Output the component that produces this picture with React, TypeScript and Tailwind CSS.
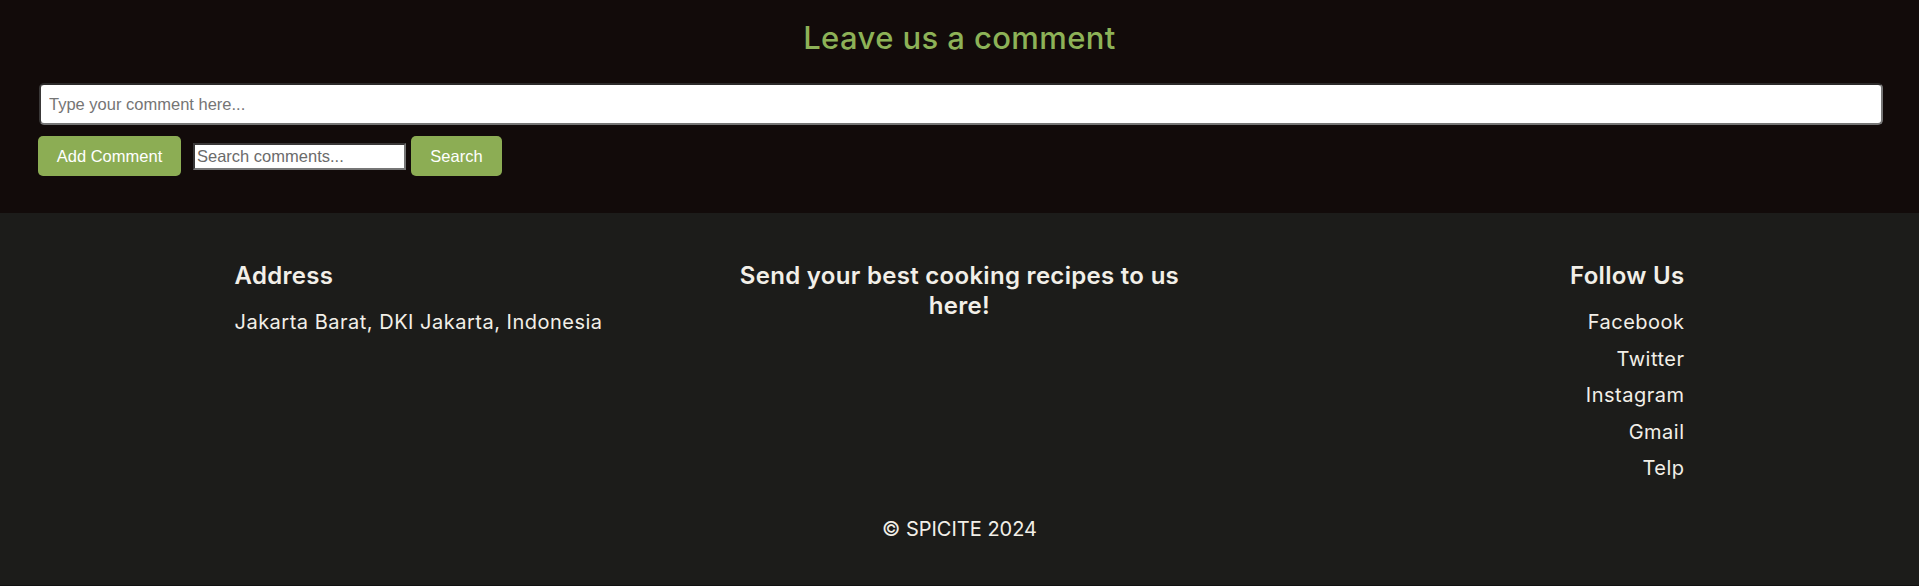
import React from "react";

const links = ["Facebook", "Twitter", "Instagram", "Gmail", "Telp"];

export default function App() {
  return (
    <div className="w-[1919px] h-[586px] overflow-hidden font-['Inter',sans-serif]">
      {/* Comment section */}
      <section className="h-[213px] bg-[#120b0a] pt-5 px-[39px]">
        <h2 className="text-center text-[31px] leading-[36px] tracking-[0.4px] font-medium text-[#8db257]">
          Leave us a comment
        </h2>

        <input
          type="text"
          placeholder="Type your comment here..."
          className="mt-[27px] block w-[1844px] h-[42px] rounded-[5px] bg-white border-2 border-t-[#2c2a2a] border-l-[#3a3838] border-r-[#767676] border-b-[#767676] pl-2 font-['Liberation_Sans',Arial,sans-serif] text-[16.5px] text-black placeholder:text-[#757575] outline-none"
        />

        <div className="mt-[11px] flex items-center -ml-px">
          <button className="w-[143px] h-[40px] rounded-[5px] bg-[#8cad54] text-white font-['Liberation_Sans',Arial,sans-serif] text-[16.5px]">
            Add Comment
          </button>
          <input
            type="text"
            placeholder="Search comments..."
            className="ml-[12px] w-[213px] h-[27px] bg-white border-2 border-t-[#3a3838] border-l-[#3a3838] border-r-[#767676] border-b-[#767676] px-[2px] font-['Liberation_Sans',Arial,sans-serif] text-[16.5px] text-black placeholder:text-[#6b6b6b] outline-none"
          />
          <button className="ml-[5px] w-[91px] h-[40px] rounded-[5px] bg-[#8cad54] text-white font-['Liberation_Sans',Arial,sans-serif] text-[16.5px]">
            Search
          </button>
        </div>
      </section>

      {/* Footer */}
      <footer className="h-[372px] bg-[#1c1c1a] text-[#f2efe8] pt-[48px]">
        <div className="w-[1450px] mx-auto grid grid-cols-3">
          <div className="text-left">
            <h3 className="text-[24px] leading-[30px] tracking-[0.3px] font-semibold">Address</h3>
            <p className="mt-[13px] text-[20px] leading-[36.5px] tracking-[0.5px]">
              Jakarta Barat, DKI Jakarta, Indonesia
            </p>
          </div>

          <div className="flex justify-center">
            <h3 className="w-[460px] text-center text-[24px] leading-[30px] tracking-[0.3px] font-semibold">
              Send your best cooking recipes to us here!
            </h3>
          </div>

          <div className="text-right">
            <h3 className="text-[24px] leading-[30px] tracking-[0.3px] font-semibold">Follow Us</h3>
            <ul className="mt-[13px] flex flex-col">
              {links.map((l) => (
                <li key={l} className="text-[20px] leading-[36.5px] tracking-[0.5px]">
                  <a href="#">{l}</a>
                </li>
              ))}
            </ul>
          </div>
        </div>

        <p className="mt-[29px] text-center text-[20px] leading-[27px]">
          © SPICITE 2024
        </p>
      </footer>
      <div className="h-px bg-[#111111]" />
    </div>
  );
}
